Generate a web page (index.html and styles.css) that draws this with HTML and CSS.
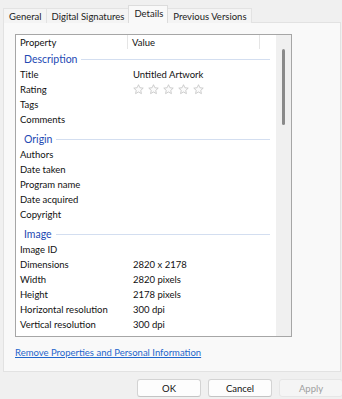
FILE: index.html
```html
<!DOCTYPE html>
<html lang="en">
  <head>
    <meta charset="UTF-8" />
    <title>Properties</title>
    <link rel="stylesheet" href="styles.css">
  </head>
  <body>
    <div class="dialog">
      <nav class="tabs">
        <div class="tab">General</div>
        <div class="tab">Digital Signatures</div>
        <div class="tab active">Details</div>
        <div class="tab">Previous Versions</div>
      </nav>

      <section class="panel">
        <div class="list">
          <div class="list-body">
            <div class="list-header">
              <div class="col-prop">Property</div>
              <div class="col-value">Value</div>
              <div class="col-extra"></div>
            </div>

            <div class="group first"><span>Description</span><i></i></div>
            <div class="row"><span>Title</span><span>Untitled Artwork</span></div>
            <div class="row">
              <span>Rating</span>
              <span class="stars">
                <svg viewBox="0 0 12 12"><path d="M6 .8l1.55 3.3 3.6.4-2.7 2.45.75 3.55L6 8.7l-3.2 1.8.75-3.55L.85 4.5l3.6-.4z"/></svg>
                <svg viewBox="0 0 12 12"><path d="M6 .8l1.55 3.3 3.6.4-2.7 2.45.75 3.55L6 8.7l-3.2 1.8.75-3.55L.85 4.5l3.6-.4z"/></svg>
                <svg viewBox="0 0 12 12"><path d="M6 .8l1.55 3.3 3.6.4-2.7 2.45.75 3.55L6 8.7l-3.2 1.8.75-3.55L.85 4.5l3.6-.4z"/></svg>
                <svg viewBox="0 0 12 12"><path d="M6 .8l1.55 3.3 3.6.4-2.7 2.45.75 3.55L6 8.7l-3.2 1.8.75-3.55L.85 4.5l3.6-.4z"/></svg>
                <svg viewBox="0 0 12 12"><path d="M6 .8l1.55 3.3 3.6.4-2.7 2.45.75 3.55L6 8.7l-3.2 1.8.75-3.55L.85 4.5l3.6-.4z"/></svg>
              </span>
            </div>
            <div class="row"><span>Tags</span><span></span></div>
            <div class="row"><span>Comments</span><span></span></div>

            <div class="group"><span>Origin</span><i></i></div>
            <div class="row"><span>Authors</span><span></span></div>
            <div class="row"><span>Date taken</span><span></span></div>
            <div class="row"><span>Program name</span><span></span></div>
            <div class="row"><span>Date acquired</span><span></span></div>
            <div class="row"><span>Copyright</span><span></span></div>

            <div class="group"><span>Image</span><i></i></div>
            <div class="row"><span>Image ID</span><span></span></div>
            <div class="row"><span>Dimensions</span><span>2820 x 2178</span></div>
            <div class="row"><span>Width</span><span>2820 pixels</span></div>
            <div class="row"><span>Height</span><span>2178 pixels</span></div>
            <div class="row"><span>Horizontal resolution</span><span>300 dpi</span></div>
            <div class="row"><span>Vertical resolution</span><span>300 dpi</span></div>
          </div>

          <div class="scrollbar"><div class="thumb"></div></div>
        </div>

        <a class="link" href="#">Remove Properties and Personal Information</a>
      </section>

      <footer class="buttons">
        <button>OK</button>
        <button>Cancel</button>
        <button class="disabled">Apply</button>
      </footer>
    </div>
  </body>
</html>
```

FILE: styles.css
```css
* {
  margin: 0;
  padding: 0;
  box-sizing: border-box;
}

body {
  background: #f0f0f0;
  font-family: Lato, "Noto Sans", sans-serif;
  font-size: 9.5px;
  color: #111;
  overflow: hidden;
}

/* Tabs */
.tabs {
  display: flex;
  align-items: flex-end;
  height: 23px;
  padding: 5px 0 0 3px;
  position: relative;
  z-index: 1;
}

.tab {
  height: 15px;
  line-height: 16px;
  padding: 0 4px 0 5px;
  background: #f4f4f4;
  border: 1px solid #e3e3e3;
  border-bottom: none;
  margin-right: -1px;
  white-space: nowrap;
  color: #222;
}

.tab.active {
  height: 18px;
  line-height: 16px;
  background: #f9f9f9;
  border-color: #dcdcdc;
  position: relative;
  z-index: 2;
}

/* Panel */
.panel {
  margin: -1px 1px 0 3px;
  height: 350px;
  background: #f9f9f9;
  border: 1px solid #e2e2e2;
  padding: 11px 0 0 11px;
}

.list {
  display: flex;
  width: 277px;
  height: 303px;
  background: #fff;
  border: 1px solid #a6a6a6;
  overflow: hidden;
}

.list-body {
  flex: 1;
}

.list-header {
  display: flex;
  height: 14px;
  line-height: 15px;
}

.list-header div {
  padding-left: 4px;
}

.col-prop {
  width: 112px;
  border-right: 1px solid #e5e5e5;
}

.col-value {
  width: 132px;
  border-right: 1px solid #e5e5e5;
}

.group {
  display: flex;
  align-items: center;
  height: 20px;
  padding: 3px 6px 0 8px;
  color: #2349b3;
  font-size: 10.5px;
}

.group.first {
  height: 18px;
  padding-top: 1px;
}

.group i {
  flex: 1;
  height: 1px;
  margin: 1px 0 0 4px;
  background: #d3def0;
}

.row {
  display: flex;
  height: 15px;
  line-height: 15px;
}

.row span:first-child {
  width: 112px;
  padding-left: 4px;
}

.row span:last-child {
  padding-left: 5px;
}

.stars {
  display: flex;
  align-items: center;
  gap: 4px;
  padding-left: 5px;
}

.stars svg {
  width: 11px;
  height: 11px;
  fill: #fbfbfb;
  stroke: #c4c4c4;
  stroke-width: 0.9;
  stroke-linejoin: round;
}

.scrollbar {
  width: 15px;
  background: #f0f0f0;
  padding: 14px 0 0 6px;
}

.thumb {
  width: 3px;
  height: 76px;
  background: #8a8a8a;
  border-radius: 2px;
}

.link {
  display: block;
  margin-top: 8px;
  line-height: 15px;
  color: #1f66cc;
  text-decoration: underline;
}

/* Buttons */
.buttons {
  display: flex;
  gap: 7px;
  padding: 7px 0 0 137px;
}

button {
  width: 64px;
  height: 18px;
  flex-shrink: 0;
  font-family: inherit;
  font-size: 9.5px;
  color: #111;
  background: #fdfdfd;
  border: 1px solid #d3d3d3;
  border-bottom-color: #c4c4c4;
  border-radius: 3px;
}

button.disabled {
  color: #a0a0a0;
  background: #f5f5f5;
  border-color: #e6e6e6;
}
```
